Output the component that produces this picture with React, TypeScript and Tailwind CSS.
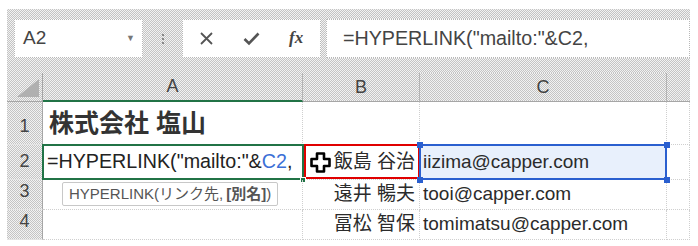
import React from "react";

const checker =
  "bg-[image:repeating-conic-gradient(#c4c4c4_0%_25%,#f2f2f2_0%_50%)] bg-size-[2px_2px]";

const font = "font-['Liberation_Sans','Noto_Sans_CJK_JP',sans-serif]";

function XIcon() {
  return (
    <svg width="15" height="15" viewBox="0 0 15 15">
      <path d="M2 2 L13 13 M13 2 L2 13" stroke="#555" strokeWidth="1.8" fill="none" />
    </svg>
  );
}

function CheckIcon() {
  return (
    <svg width="17" height="15" viewBox="0 0 17 15">
      <path d="M1.5 8 L6 12.5 L15.5 2.5" stroke="#555" strokeWidth="2.6" fill="none" />
    </svg>
  );
}

function PlusCursor() {
  return (
    <svg width="21" height="21" viewBox="0 0 21 21" className="shrink-0">
      <path
        d="M7 1.5 H14 V7 H19.5 V14 H14 V19.5 H7 V14 H1.5 V7 H7 Z"
        fill="#fff"
        stroke="#000"
        strokeWidth="2.6"
        strokeLinejoin="round"
      />
    </svg>
  );
}

function ColHeader({ label, selected, last }: { label: string; selected?: boolean; last?: boolean }) {
  return (
    <div
      className={`${checker} flex items-center justify-center text-[18px] text-[#444] ${
        last ? "" : "border-r border-[#b4b4b4]"
      } ${selected ? "border-b-2 border-b-[#217346]" : "border-b border-b-[#a6a6a6]"}`}
    >
      {label}
    </div>
  );
}

function RowHeader({ n }: { n: number }) {
  return (
    <div
      className={`${checker} flex items-end justify-center pb-[4px] text-[18px] text-[#444] border-r border-[#a6a6a6] border-b border-b-[#e4e4e4]`}
    >
      {n}
    </div>
  );
}

const cell = "relative flex items-center border-r border-b border-dotted border-[#cfcfcf] text-[#2b2b2b]";

export default function App() {
  return (
    <div className={`w-[698px] h-[246px] bg-white pt-[9px] pl-[7px] overflow-hidden ${font}`}>
      <div className={`w-[683px] ${checker}`}>
        {/* formula bar */}
        <div className="h-[64px] flex items-start pt-[10px] pl-[7px]">
          <div className="w-[129px] h-[39px] bg-white border border-dotted border-[#b8b8b8] flex items-center pl-[8px] pr-[7px]">
            <span className="text-[19px] text-[#444]">A2</span>
            <span className="ml-auto text-[9px] text-[#777]">▼</span>
          </div>
          <div className="w-[39px] h-[39px] flex flex-col items-center justify-center gap-[2px]">
            <span className="w-[2px] h-[2px] bg-[#888]" />
            <span className="w-[2px] h-[2px] bg-[#888]" />
            <span className="w-[2px] h-[2px] bg-[#888]" />
          </div>
          <div className="w-[139px] h-[39px] bg-white border border-dotted border-[#b8b8b8] flex items-center pl-[16px] gap-[29px]">
            <XIcon />
            <CheckIcon />
            <span className="font-['Liberation_Serif',serif] italic font-bold text-[17px] text-[#444] -mt-[2px]">
              fx
            </span>
          </div>
          <div className="ml-[5px] flex-1 h-[39px] bg-white border border-dotted border-[#b8b8b8] flex items-center pl-[16px]">
            <span className="text-[19.7px] text-[#444]">=HYPERLINK("mailto:"&amp;C2,</span>
          </div>
        </div>

        {/* grid */}
        <div className="grid grid-cols-[36px_260px_117px_247px_23px] grid-rows-[29px_43px_35px_30px_30px] bg-white">
          <div className={`${checker} relative border-r border-[#a6a6a6] border-b border-b-[#a6a6a6]`}>
            <svg width="22" height="18" viewBox="0 0 22 18" className="absolute left-[10px] top-[6px]">
              <path d="M22 0 L22 18 L0 18 Z" fill="#b0b0b0" />
            </svg>
          </div>
          <ColHeader label="A" selected />
          <ColHeader label="B" />
          <ColHeader label="C" />
          <ColHeader label="" last />

          {/* row 1 */}
          <RowHeader n={1} />
          <div className={`${cell} pl-[6px] pt-[2px]`}>
            <span className="text-[25px] font-bold text-[#333]">株式会社 塩山</span>
          </div>
          <div className={cell} />
          <div className={cell} />
          <div className={cell} />

          {/* row 2 */}
          <RowHeader n={2} />
          <div className={`${cell} pl-[4px] z-10`}>
            <span className="text-[19.7px] text-[#222] whitespace-nowrap">
              =HYPERLINK("mailto:"&amp;<span className="text-[#3b6fd6]">C2</span>,
            </span>
            <div className="absolute -left-px -top-px w-[262px] h-[36px] border-2 border-[#217346]" />
            <div className="absolute right-[-4px] bottom-[-4px] w-[6px] h-[6px] bg-[#217346] border border-white" />
          </div>
          <div className={`${cell} justify-end pr-[4px]`}>
            <div className="absolute left-[1px] -top-px right-[-1px] h-[35px] border-[2.5px] border-[#e00000]" />
            <div className="absolute left-[7px] top-[7px]">
              <PlusCursor />
            </div>
            <span className="text-[19px]">飯島 谷治</span>
          </div>
          <div className={`${cell} bg-[#e8f0fc] pl-[3px] z-10`}>
            <span className="text-[19px]">iizima@capper.com</span>
            <div className="absolute -left-px -top-px right-[-1px] bottom-[-1px] border-2 border-[#2a5fcf]" />
            <div className="absolute left-[-3px] top-[-3px] w-[6px] h-[6px] bg-[#2a5fcf]" />
            <div className="absolute right-[-4px] top-[-3px] w-[6px] h-[6px] bg-[#2a5fcf]" />
            <div className="absolute left-[-3px] bottom-[-4px] w-[6px] h-[6px] bg-[#2a5fcf]" />
            <div className="absolute right-[-4px] bottom-[-4px] w-[6px] h-[6px] bg-[#2a5fcf]" />
          </div>
          <div className={cell} />

          {/* row 3 */}
          <RowHeader n={3} />
          <div className={`${cell} z-20`}>
            <div className="absolute left-[19px] top-[2px] w-[216px] h-[24px] bg-white border border-[#c8c8c8] rounded-[2px] flex items-center pl-[6px] text-[15px] text-[#555] whitespace-nowrap">
              HYPERLINK(リンク先, <span className="font-bold ml-[3px]">[別名]</span>)
            </div>
          </div>
          <div className={`${cell} justify-end pr-[4px]`}>
            <span className="text-[19px]">遠井 暢夫</span>
          </div>
          <div className={`${cell} pl-[3px]`}>
            <span className="text-[19px]">tooi@capper.com</span>
          </div>
          <div className={cell} />

          {/* row 4 */}
          <RowHeader n={4} />
          <div className={cell} />
          <div className={`${cell} justify-end pr-[4px]`}>
            <span className="text-[19px]">冨松 智保</span>
          </div>
          <div className={`${cell} pl-[3px]`}>
            <span className="text-[19px]">tomimatsu@capper.com</span>
          </div>
          <div className={cell} />
        </div>
      </div>
    </div>
  );
}
